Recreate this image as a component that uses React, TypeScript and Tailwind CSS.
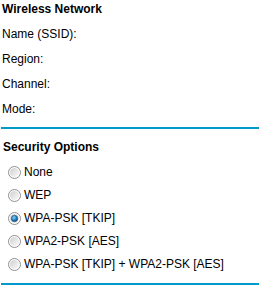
import React from "react";

function Radio({ checked }: { checked?: boolean }) {
  return (
    <svg width="13" height="13" viewBox="0 0 13 13" className="shrink-0">
      <defs>
        <linearGradient id={checked ? "rgc" : "rgu"} x1="0" y1="0" x2="1" y2="1">
          <stop offset="0" stopColor="#cfcfcf" />
          <stop offset="1" stopColor="#fbfbfb" />
        </linearGradient>
        <radialGradient id="dot" cx="0.4" cy="0.35" r="0.7">
          <stop offset="0" stopColor="#8fd0f5" />
          <stop offset="0.6" stopColor="#1f7fc0" />
          <stop offset="1" stopColor="#0f3f6f" />
        </radialGradient>
      </defs>
      <circle cx="6.5" cy="6.5" r="6" fill="#ffffff" stroke="#8f8f8f" strokeWidth="1" />
      <circle cx="6.5" cy="6.5" r="4.6" fill={checked ? "url(#rgc)" : "url(#rgu)"} />
      {checked && <circle cx="6.5" cy="6.5" r="3.2" fill="url(#dot)" stroke="#1a4a70" strokeWidth="0.6" />}
    </svg>
  );
}

export default function App() {
  const fields = ["Name (SSID):", "Region:", "Channel:", "Mode:"];
  const options = [
    { label: "None", checked: false },
    { label: "WEP", checked: false },
    { label: "WPA-PSK [TKIP]", checked: true },
    { label: "WPA2-PSK [AES]", checked: false },
    { label: "WPA-PSK [TKIP] + WPA2-PSK [AES]", checked: false },
  ];
  return (
    <div
      className="w-[259px] h-[285px] overflow-hidden bg-white text-black text-[12px]"
      style={{ fontFamily: '"Liberation Sans", Arial, sans-serif' }}
    >
      <div className="flex flex-col gap-[10px] pt-[2px] pl-[2px]">
        <div className="leading-[15px] font-bold">Wireless Network</div>
        {fields.map((f) => (
          <div key={f} className="leading-[15px]">
            {f}
          </div>
        ))}
      </div>
      <div className="mt-[10px] ml-px h-[2px] bg-[#0099cc]" />
      <div className="flex flex-col gap-[10px] pt-[11px]">
        <div className="leading-[15px] font-bold pl-[3px]">Security Options</div>
        <div className="flex flex-col gap-[8px]">
          {options.map((o) => (
            <label key={o.label} className="flex items-center gap-[3px] pl-[8px] leading-[15px]">
              <Radio checked={o.checked} />
              <span>{o.label}</span>
            </label>
          ))}
        </div>
      </div>
      <div className="mt-[11px] ml-px h-[2px] bg-[#0099cc]" />
    </div>
  );
}
